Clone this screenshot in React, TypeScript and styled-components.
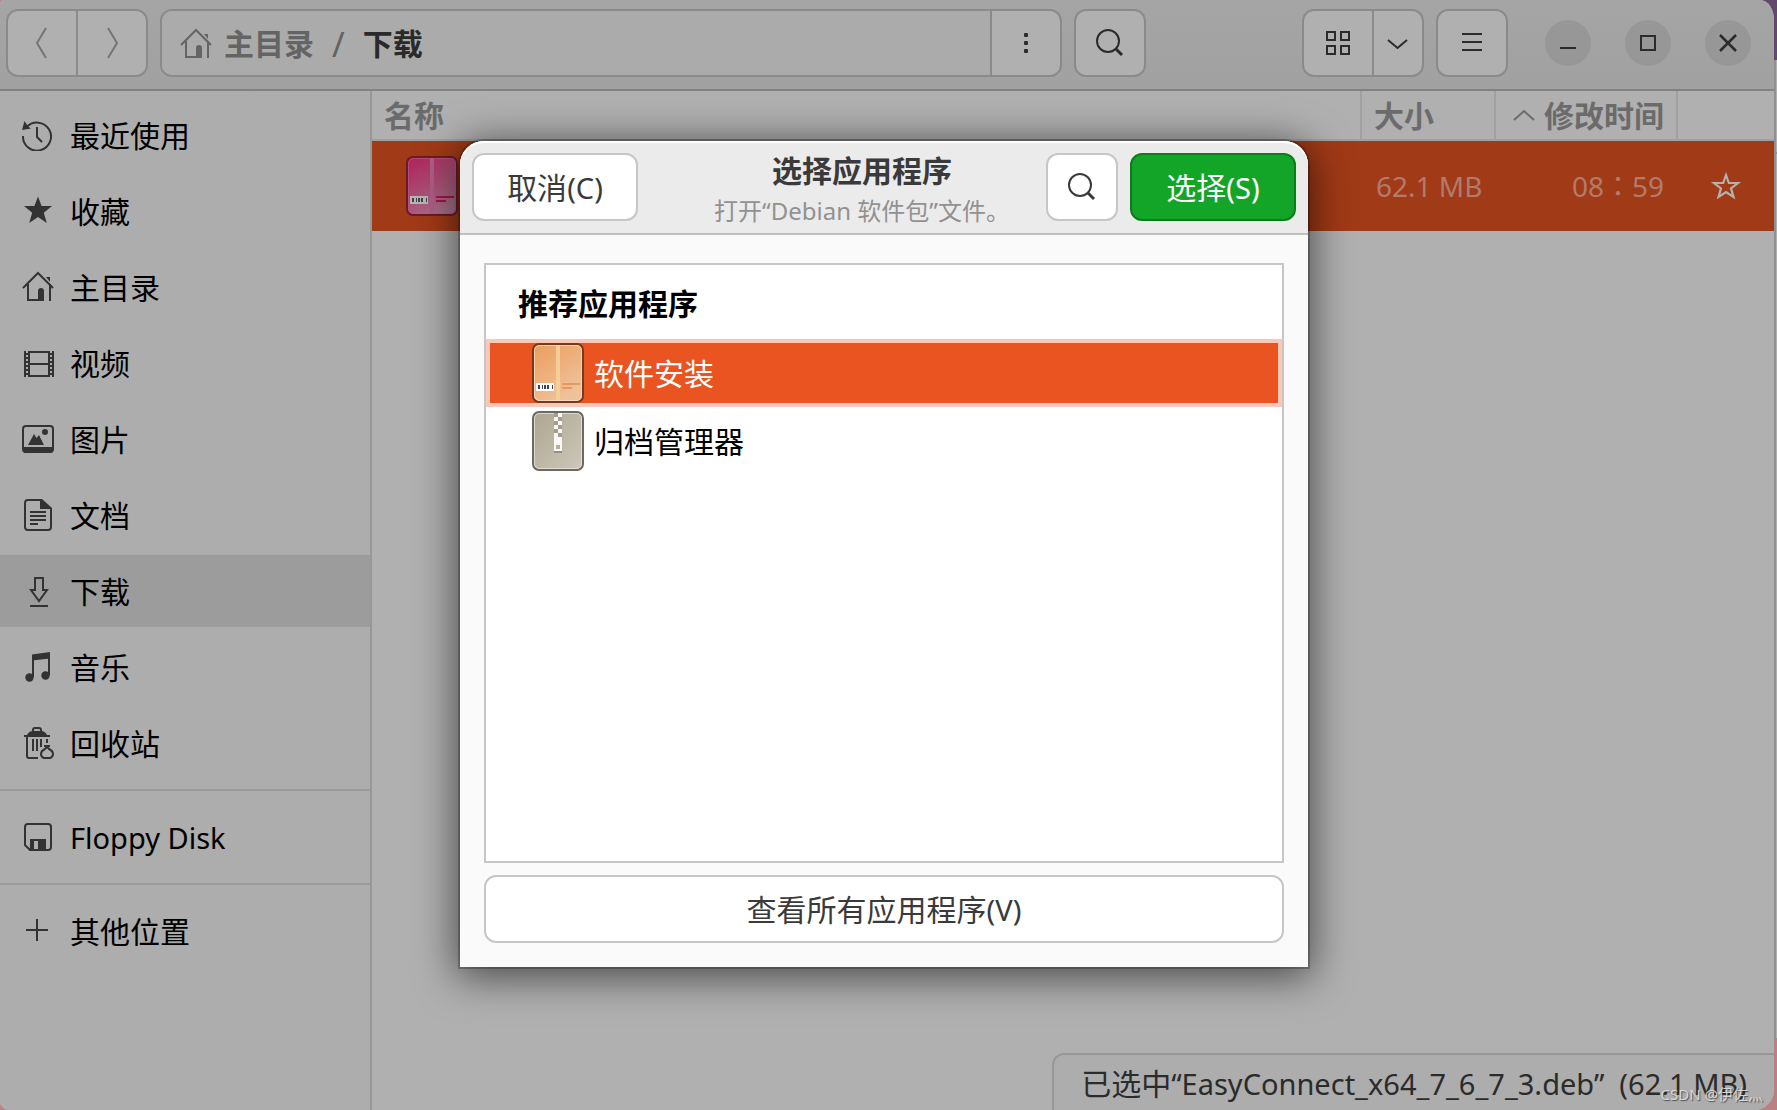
import React, { useState } from "react";
import styled, { createGlobalStyle, css } from "styled-components";

const uiFont = `"Noto Sans", "Noto Sans CJK SC", sans-serif`;

const GlobalStyle = createGlobalStyle`
  *, *::before, *::after { box-sizing: border-box; }
  body {
    margin: 0;
    font-family: ${uiFont};
    font-size: 30px;
    line-height: 40px;
    color: #000;
  }
  button, a { font: inherit; color: inherit; text-decoration: none; }
  button { margin: 0; padding: 0; border: 0; background: none; cursor: pointer; }
  ul { margin: 0; padding: 0; list-style: none; }
`;

/* ---------- desktop and window frame ---------- */

const Desktop = styled.div`
  position: relative;
  display: flex;
  min-height: 100vh;
  overflow: hidden;
  background:
    linear-gradient(#60496a, #60496a) right top / 40px 60px no-repeat,
    linear-gradient(#c27c82, #b98083);
`;

const Window = styled.div`
  flex: 1;
  min-width: 0;
  display: flex;
  flex-direction: column;
  overflow: hidden;
  border-radius: 4px 14px 20px 10px / 4px 20px 20px 8px;
  background: #b0b0b0;
`;

const ScreenEdge = styled.div`
  width: 3px;
  display: flex;
  flex-direction: column;
  padding: 60px 0 70px;
`;

const EdgePane = styled.div<{ $tall?: boolean }>`
  flex: ${(p) => (p.$tall ? "1" : "0 0 94px")};
  border-left: 2px solid #909090;
  border-bottom: 2px solid #909090;
  background: #b0b0b0;
`;

/* ---------- header bar ---------- */

const HeaderBar = styled.header`
  display: flex;
  gap: 12px;
  padding: 9px 23px 12px 6px;
  border-bottom: 2px solid #828282;
  background: linear-gradient(#a5a5a5, #a1a1a1);
`;

const frame = css`
  border: 2px solid #8a8a8a;
  border-radius: 12px;
  background: #b0b0b0;
`;

const Linked = styled.div`
  display: flex;
  height: 68px;
  overflow: hidden;
  ${frame}
`;

const LinkedButton = styled.button<{ $width: number; $divided?: boolean; $dim?: boolean }>`
  width: ${(p) => p.$width}px;
  display: flex;
  align-items: center;
  justify-content: center;
  color: ${(p) => (p.$dim ? "#757575" : "#2b2b2b")};
  border-right: ${(p) => (p.$divided ? "2px solid #8a8a8a" : "0")};
`;

const IconButton = styled.button<{ $light?: boolean }>`
  flex: none;
  width: 72px;
  height: 68px;
  display: flex;
  align-items: center;
  justify-content: center;
  color: #2b2b2b;
  ${frame}
  ${(p) => p.$light && css`border-color: #c6c6c6; background: #fff; color: #3a3a3a;`}
`;

const PathBar = styled(Linked)`
  flex: 1;
  max-width: 902px;
`;

const Crumbs = styled.nav`
  flex: 1;
  display: flex;
  align-items: center;
  gap: 12px;
  padding: 2px 0 0 18px;
  font-weight: 700;
  color: #626262;
  background: #ababab;
  border-right: 2px solid #8a8a8a;
`;

const Crumb = styled.a<{ $current?: boolean }>`
  display: flex;
  align-items: center;
  gap: 12px;
  color: ${(p) => (p.$current ? "#2a2a2a" : "#646464")};
`;

const Slash = styled.span`
  padding: 0 6px;
  font-size: 34px;
  font-weight: 400;
`;

const HeaderEnd = styled.div`
  display: flex;
  align-items: center;
  gap: 12px;
  margin-left: auto;
`;

const WindowControls = styled.div`
  display: flex;
  gap: 34px;
  margin-left: 25px;
`;

const RoundButton = styled.button`
  width: 46px;
  height: 46px;
  display: flex;
  align-items: center;
  justify-content: center;
  border-radius: 50%;
  color: #2b2b2b;
  background: #979797;
`;

/* ---------- sidebar ---------- */

const Body = styled.div`
  flex: 1;
  display: flex;
`;

const Sidebar = styled.nav`
  flex: none;
  width: 372px;
  border-right: 2px solid #979797;
  background: #adadad;
`;

const PlaceGroup = styled.ul`
  display: flex;
  flex-direction: column;
  gap: 4px;
  padding: 8px 0 10px;
  & + & {
    padding-top: 10px;
    border-top: 2px solid #9b9b9b;
  }
`;

const Place = styled.a<{ $active?: boolean }>`
  display: flex;
  align-items: center;
  gap: 16px;
  height: 72px;
  padding-left: 22px;
  background: ${(p) => (p.$active ? "#9c9c9c" : "transparent")};
  svg { color: #333; }
`;

const PlaceLabel = styled.span<{ $latin?: boolean }>`
  padding-top: 2px;
  font-size: ${(p) => (p.$latin ? "29px" : "30px")};
`;

const Latin = styled.span`
  font-size: 29px;
`;

/* ---------- file list ---------- */

const Content = styled.main`
  flex: 1;
  min-width: 0;
  display: flex;
  flex-direction: column;
  justify-content: space-between;
  background: #b0b0b0;
`;

const FileTable = styled.table`
  width: 100%;
  border-collapse: separate;
  border-spacing: 0;
  table-layout: fixed;
`;

const HeadCell = styled.th<{ $width?: number; $end?: boolean; $last?: boolean }>`
  width: ${(p) => (p.$width ? `${p.$width}px` : "auto")};
  height: 50px;
  padding: 2px 12px 0;
  text-align: ${(p) => (p.$end ? "right" : "left")};
  color: #6b6b6b;
  border-bottom: 2px solid #a0a0a0;
  border-right: ${(p) => (p.$last ? "0" : "2px solid #a0a0a0")};
`;

const SortLabel = styled.span`
  display: flex;
  align-items: center;
  justify-content: flex-end;
  gap: 8px;
`;

const FileCell = styled.td<{ $align?: string; $first?: boolean }>`
  height: 90px;
  padding: 0 14px;
  padding-left: ${(p) => (p.$first ? "34px" : "14px")};
  text-align: ${(p) => p.$align || "left"};
  white-space: nowrap;
  font-family: "Noto Sans", "Noto Sans CJK TC", sans-serif;
  font-size: 28px;
  color: #b27b6b;
  background: #a13a17;
`;

const StarButton = styled.button`
  display: block;
  margin: 0 auto;
  color: #b4b0ae;
`;

const StatusBar = styled.footer`
  align-self: flex-end;
  height: 57px;
  padding: 9px 27px;
  border: 2px solid #979797;
  border-width: 2px 0 0 2px;
  border-radius: 12px 0 0 0;
  color: #2b2b2b;
  white-space: pre;
  background: #adadad;
`;

/* ---------- dialog ---------- */

const Backdrop = styled.div`
  position: absolute;
  inset: 0;
  display: flex;
  align-items: flex-start;
  justify-content: center;
  padding: 141px 9px 0 0;
`;

const Dialog = styled.section`
  width: 848px;
  max-width: 100%;
  border-radius: 24px 24px 0 0;
  background: #fafafa;
  box-shadow: 0 0 0 2px rgba(0, 0, 0, 0.24), 0 6px 40px 4px rgba(0, 0, 0, 0.58);
`;

const DialogHeader = styled.header`
  display: flex;
  align-items: center;
  gap: 12px;
  height: 94px;
  padding: 0 12px;
  border-bottom: 2px solid #bfbfbf;
  border-radius: 24px 24px 0 0;
  background: #ebebeb;
  box-shadow: inset 0 2px #fff;
`;

const DialogButton = styled.button<{ $primary?: boolean; $wide?: boolean }>`
  width: ${(p) => (p.$wide ? "100%" : "166px")};
  height: 68px;
  padding-top: 2px;
  border: 2px solid ${(p) => (p.$primary ? "#0e7c1b" : "#c6c6c6")};
  border-radius: 12px;
  color: ${(p) => (p.$primary ? "#fff" : "#3a3a3a")};
  background: ${(p) => (p.$primary ? "#13a528" : "#fff")};
`;

const TitleBlock = styled.div`
  flex: 1;
  padding: 4px 0 0 40px;
  text-align: center;
`;

const Title = styled.h1`
  margin: 0;
  font-size: 30px;
  line-height: 44px;
  font-weight: 700;
  color: #3a3a3a;
`;

const Subtitle = styled.p`
  margin: 0;
  font-size: 24px;
  line-height: 36px;
  white-space: nowrap;
  color: #919191;
`;

const DialogBody = styled.div`
  display: flex;
  flex-direction: column;
  gap: 12px;
  padding: 28px 24px 24px;
`;

const AppList = styled.div`
  min-height: 600px;
  border: 2px solid #c6c6c6;
  background: #fff;
`;

const GroupTitle = styled.h2`
  margin: 0;
  padding: 19px 32px 15px;
  font-size: 30px;
  line-height: 40px;
  font-weight: 700;
`;

const AppRow = styled.button<{ $selected: boolean }>`
  width: 100%;
  height: 68px;
  display: flex;
  align-items: center;
  gap: 10px;
  padding-left: 42px;
  border: 4px solid ${(p) => (p.$selected ? "#f8c8b8" : "transparent")};
  color: ${(p) => (p.$selected ? "#fff" : "#000")};
  background: ${(p) => (p.$selected ? "#e95420" : "#fff")};
`;

const AppName = styled.span`
  padding-top: 2px;
`;

const Watermark = styled.span`
  position: absolute;
  right: 14px;
  bottom: 6px;
  font-size: 15px;
  line-height: 20px;
  color: rgba(225, 225, 225, 0.9);
  text-shadow: 1px 1px 1px rgba(40, 40, 40, 0.7);
`;

/* ---------- icons ---------- */

type IconName =
  | "recent" | "star" | "home" | "video" | "image" | "doc" | "download" | "music"
  | "trash" | "floppy" | "plus" | "back" | "forward" | "dots" | "search" | "grid"
  | "down" | "up" | "menu" | "minimize" | "maximize" | "close" | "starOutline";

const line = { fill: "none", stroke: "currentColor", strokeWidth: 2 };

const shapes: Record<IconName, React.ReactNode> = {
  recent: (
    <>
      <path {...line} d="M4.6 8.2A14 14 0 1 1 1 17" />
      <path d="M2.5 2 0 11l9-1.5-3-2z" fill="currentColor" />
      <path {...line} d="M15 8v10l5 5" />
    </>
  ),
  star: <path fill="currentColor" d="M16 1.5l3.6 9.6H30l-8.2 6.6 3 10.3-8.800-6-8.800 6 3-10.300L2 11.100h10.400z" />,
  home: (
    <>
      <path {...line} d="M1 17 16 2l15 15M6 13v16h16M28 13v17" />
      <path fill="currentColor" d="M16 30V20q0-3 3-3t3 3v10zM24 6h4v5z" />
    </>
  ),
  video: (
    <>
      <path {...line} d="M3 4v26M7 4v26M27 4v26M31 4v26M6 5h22M6 29h22M7 17h20" />
      <path {...line} strokeDasharray="2 2" d="M5 6v24M29 6v24" />
    </>
  ),
  image: (
    <>
      <rect {...line} x="1" y="3" width="30" height="26" rx="3" />
      <path fill="currentColor" d="M1 24h30v3q0 3-3 3H4q-3 0-3-3zM6 22l6-11 2.500 4L17 12l5 10z" />
      <circle cx="23" cy="9" r="3" fill="currentColor" />
    </>
  ),
  doc: (
    <>
      <path {...line} d="M19 1H6Q3 1 3 4v24q0 3 3 3h20q3 0 3-3V9" />
      <path fill="currentColor" d="M18 0h2l10 9v1H18z" />
      <path {...line} d="M8 13h16M8 17h16M8 21h16M8 25h8" />
    </>
  ),
  download: <path {...line} d="M13 3h8v12h4l-8 11-8-11h4zM8 31h18" />,
  music: (
    <>
      <path fill="currentColor" d="M10 3.500 28 1v6.500L10 9.500z" />
      <path {...line} d="M11 5v21M27 4v20" />
      <circle cx="7.500" cy="26.500" r="4.200" fill="currentColor" />
      <circle cx="23.500" cy="24.500" r="4.200" fill="currentColor" />
    </>
  ),
  trash: (
    <>
      <path {...line} d="M11 5V3q0-2 2-2h4q2 0 2 2v2M5 10v19q0 2 2 2h9M11 12v12M15 12v12M19 12v8M25 12v4" />
      <path fill="currentColor" d="M2 8h3q2-4 6-4h8q4 0 6 4h3v2H2z" />
      <path {...line} d="M22 19h6M25 20l-2 2q-4 2-4 5t3 4h6q3-1 3-4t-4-5z" />
    </>
  ),
  floppy: (
    <>
      <path {...line} d="M6 3h20q3 0 3 3v20q0 3-3 3H8l-5-5V6q0-3 3-3z" />
      <path fill="currentColor" fillRule="evenodd" d="M8 18h16v12H8zM12 20v8h4v-8z" />
    </>
  ),
  plus: <path {...line} d="M15 4v22M4 15h22" />,
  back: <path {...line} d="M20 1 11 16l9 15" />,
  forward: <path {...line} d="M12 1l9 15-9 15" />,
  dots: (
    <g fill="currentColor">
      <rect x="14" y="6" width="4" height="4" rx="1" />
      <rect x="14" y="14" width="4" height="4" rx="1" />
      <rect x="14" y="22" width="4" height="4" rx="1" />
    </g>
  ),
  search: (
    <>
      <circle {...line} cx="14" cy="14" r="11" />
      <path {...line} strokeWidth="3" d="m22 22 6 6" />
    </>
  ),
  grid: (
    <g {...line}>
      <rect x="5" y="5" width="8" height="8" />
      <rect x="19" y="5" width="8" height="8" />
      <rect x="5" y="19" width="8" height="8" />
      <rect x="19" y="19" width="8" height="8" />
    </g>
  ),
  down: <path {...line} d="m6 13 9.500 8L25 13" />,
  up: <path {...line} d="m2 16 10-9 10 9" />,
  menu: <path {...line} d="M6 7h20M6 15h20M6 23h20" />,
  minimize: <path {...line} d="M8 21h16" />,
  maximize: <rect {...line} x="9" y="9" width="14" height="14" />,
  close: <path {...line} strokeWidth="2.500" d="m8 8 16 16M24 8 8 24" />,
  starOutline: <path {...line} strokeWidth="2.200" d="M16 5l2.800 8H28l-7 5.400 2.500 8.600-7.500-5-7.500 5 2.500-8.600L4 13h9.200z" />,
};

const Glyph = styled.svg`
  flex: none;
  display: block;
`;

function Icon({ name, size = 32 }: { name: IconName; size?: number }) {
  return (
    <Glyph width={size} height={size} viewBox={`0 0 ${size} ${size}`} aria-hidden="true">
      {shapes[name]}
    </Glyph>
  );
}

type Tone = { id: string; from: string; to: string; edge: string; tape: string; label: string; print: string; shine: string };

const orangeBox: Tone = { id: "box-orange", from: "#ec9d5c", to: "#f0c29c", edge: "#75391c", tape: "#f1cf97", label: "#fff", print: "#e39a62", shine: "#fbe0c8" };
const magentaBox: Tone = { id: "box-magenta", from: "#b01f58", to: "#a9708a", edge: "#6b1a2a", tape: "#b05e86", label: "#b9b4b6", print: "#a3164f", shine: "#b9587f" };

function PackageIcon({ tone }: { tone: Tone }) {
  return (
    <Glyph width="52" height="60" viewBox="0 0 52 60" aria-hidden="true">
      <linearGradient id={tone.id} x1="0" y1="0" x2="0.6" y2="1">
        <stop offset="0" stopColor={tone.from} />
        <stop offset="1" stopColor={tone.to} />
      </linearGradient>
      <rect x="1" y="1" width="50" height="58" rx="6" fill={`url(#${tone.id})`} stroke={tone.edge} strokeWidth="2" />
      <path d="M24 2h4v56h-4z" fill={tone.tape} />
      <rect x="2.500" y="2.500" width="47" height="55" rx="5" fill="none" stroke={tone.shine} strokeOpacity="0.7" />
      <path d="M4 40h18v8H4z" fill={tone.label} />
      <path d="M6 42h2v4H6zM10 42h1v4h-1zM12 42h2v4h-2zM15 42h2v4h-2zM20 42h1v4h-1z" fill="#444" />
      <path d="M30 40h18v2H30zM30 44h10v2H30z" fill={tone.print} />
    </Glyph>
  );
}

function ArchiveIcon() {
  return (
    <Glyph width="52" height="60" viewBox="0 0 52 60" aria-hidden="true">
      <linearGradient id="archive-fill" x1="0" y1="0" x2="1" y2="1">
        <stop offset="0" stopColor="#aca590" />
        <stop offset="1" stopColor="#cdc8bb" />
      </linearGradient>
      <rect x="1" y="1" width="50" height="58" rx="6" fill="url(#archive-fill)" stroke="#6c6a60" strokeWidth="2" />
      <rect x="2.500" y="2.500" width="47" height="55" rx="5" fill="none" stroke="#e6e3da" strokeOpacity="0.8" />
      <path d="M22 2h8v24h-8z" fill="#a39d8c" />
      <path d="M26 2h4v4h-4zM22 6h4v4h-4zM26 10h4v4h-4zM22 14h4v4h-4zM26 18h4v4h-4zM22 22h4v4h-4z" fill="#f8f7f4" />
      <path d="M22 40h8v2h-8z" fill="#948f80" />
      <path d="M22 26h8v14h-8z" fill="#fbfaf8" />
      <path d="M24 34h4v4h-4z" fill="#b5af9e" />
    </Glyph>
  );
}

/* ---------- data ---------- */

type PlaceItem = { icon: IconName; label: string; latin?: boolean };

const placeGroups: PlaceItem[][] = [
  [
    { icon: "recent", label: "最近使用" },
    { icon: "star", label: "收藏" },
    { icon: "home", label: "主目录" },
    { icon: "video", label: "视频" },
    { icon: "image", label: "图片" },
    { icon: "doc", label: "文档" },
    { icon: "download", label: "下载" },
    { icon: "music", label: "音乐" },
    { icon: "trash", label: "回收站" },
  ],
  [{ icon: "floppy", label: "Floppy Disk", latin: true }],
  [{ icon: "plus", label: "其他位置" }],
];

const apps = [
  { name: "软件安装", icon: <PackageIcon tone={orangeBox} /> },
  { name: "归档管理器", icon: <ArchiveIcon /> },
];

export default function App() {
  const [place, setPlace] = useState("下载");
  const [app, setApp] = useState("软件安装");

  return (
    <>
      <GlobalStyle />
      <Desktop lang="zh-CN">
        <Window>
          <HeaderBar>
            <Linked>
              <LinkedButton $width={70} $divided $dim aria-label="后退"><Icon name="back" /></LinkedButton>
              <LinkedButton $width={68} $dim aria-label="前进"><Icon name="forward" /></LinkedButton>
            </Linked>
            <PathBar>
              <Crumbs>
                <Crumb href="#home"><Icon name="home" />主目录</Crumb>
                <Slash>/</Slash>
                <Crumb href="#downloads" $current>下载</Crumb>
              </Crumbs>
              <LinkedButton $width={68} aria-label="路径菜单"><Icon name="dots" /></LinkedButton>
            </PathBar>
            <IconButton aria-label="搜索"><Icon name="search" /></IconButton>
            <HeaderEnd>
              <Linked>
                <LinkedButton $width={70} $divided aria-label="图标视图"><Icon name="grid" /></LinkedButton>
                <LinkedButton $width={48} aria-label="视图选项"><Icon name="down" /></LinkedButton>
              </Linked>
              <IconButton aria-label="菜单"><Icon name="menu" /></IconButton>
              <WindowControls>
                <RoundButton aria-label="最小化"><Icon name="minimize" /></RoundButton>
                <RoundButton aria-label="最大化"><Icon name="maximize" /></RoundButton>
                <RoundButton aria-label="关闭"><Icon name="close" /></RoundButton>
              </WindowControls>
            </HeaderEnd>
          </HeaderBar>

          <Body>
            <Sidebar>
              {placeGroups.map((group) => (
                <PlaceGroup key={group[0].label}>
                  {group.map((item) => (
                    <li key={item.label}>
                      <Place href="#place" $active={place === item.label} onClick={() => setPlace(item.label)}>
                        <Icon name={item.icon} />
                        <PlaceLabel $latin={item.latin}>{item.label}</PlaceLabel>
                      </Place>
                    </li>
                  ))}
                </PlaceGroup>
              ))}
            </Sidebar>

            <Content>
              <FileTable>
                <thead>
                  <tr>
                    <HeadCell>名称</HeadCell>
                    <HeadCell $width={134}>大小</HeadCell>
                    <HeadCell $width={182} $end>
                      <SortLabel><Icon name="up" size={24} />修改时间</SortLabel>
                    </HeadCell>
                    <HeadCell $width={96} $last aria-label="收藏" />
                  </tr>
                </thead>
                <tbody>
                  <tr>
                    <FileCell $first><PackageIcon tone={magentaBox} /></FileCell>
                    <FileCell>62.1 MB</FileCell>
                    <FileCell $align="right" lang="zh-TW">08：59</FileCell>
                    <FileCell $align="center">
                      <StarButton aria-label="加入收藏"><Icon name="starOutline" /></StarButton>
                    </FileCell>
                  </tr>
                </tbody>
              </FileTable>
              <StatusBar>
                已选中<Latin>“EasyConnect_x64_7_6_7_3.deb”  (62.1 MB)</Latin>
              </StatusBar>
            </Content>
          </Body>
        </Window>

        <ScreenEdge>
          <EdgePane />
          <EdgePane $tall />
        </ScreenEdge>

        <Backdrop>
          <Dialog role="dialog" aria-modal="true" aria-labelledby="chooser-title">
            <DialogHeader>
              <DialogButton>取消<Latin>(C)</Latin></DialogButton>
              <TitleBlock>
                <Title id="chooser-title">选择应用程序</Title>
                <Subtitle>打开“Debian 软件包”文件。</Subtitle>
              </TitleBlock>
              <IconButton $light aria-label="搜索应用程序"><Icon name="search" /></IconButton>
              <DialogButton $primary>选择<Latin>(S)</Latin></DialogButton>
            </DialogHeader>
            <DialogBody>
              <AppList>
                <GroupTitle>推荐应用程序</GroupTitle>
                {apps.map((item) => (
                  <AppRow
                    key={item.name}
                    $selected={app === item.name}
                    aria-pressed={app === item.name}
                    onClick={() => setApp(item.name)}
                  >
                    {item.icon}
                    <AppName>{item.name}</AppName>
                  </AppRow>
                ))}
              </AppList>
              <DialogButton $wide>查看所有应用程序<Latin>(V)</Latin></DialogButton>
            </DialogBody>
          </Dialog>
        </Backdrop>
        <Watermark>CSDN @伊佐灬</Watermark>
      </Desktop>
    </>
  );
}
